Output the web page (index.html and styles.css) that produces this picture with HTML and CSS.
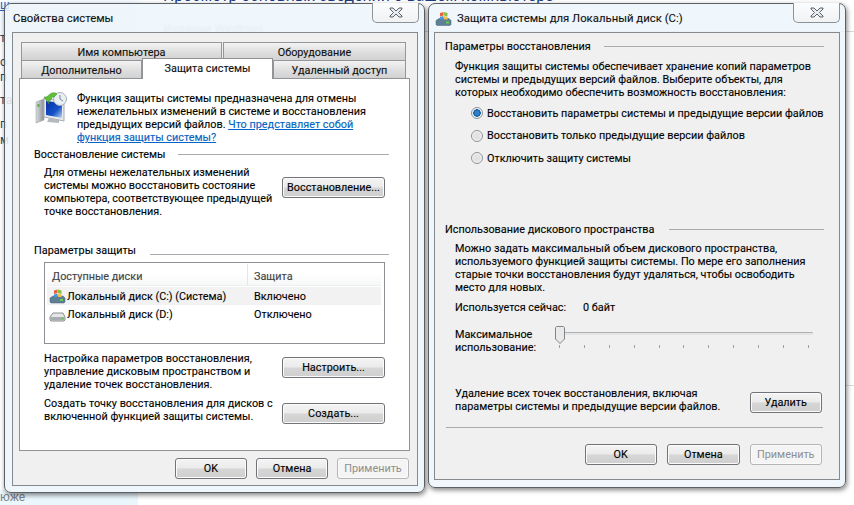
FILE: index.html
```html
<!DOCTYPE html>
<html lang="ru">
<head>
<meta charset="utf-8">
<title>Защита системы</title>
<link rel="stylesheet" href="styles.css">
</head>
<body>
<div class="desktop">
  <div class="backdrop">
    <div class="glow glow-top"></div>
    <div class="glow glow-bottom"></div>
    <h1 class="bg-title">Просмотр основных сведений о вашем компьютере</h1>
    <div class="bg-sub">Издание Windows</div>
    <div class="bg-frag bf1">ш</div>
    <div class="bg-frag bf2">т</div>
    <div class="bg-frag bf3">о</div>
    <div class="bg-frag bf4">п</div>
    <div class="bg-frag bf5">та</div>
    <div class="bg-frag bf6">п</div>
    <div class="bg-frag bf7">м</div>
    <div class="bg-frag bf8">юже</div>
    <div class="rule"></div>
    <div class="rule2"></div>
  </div>

  <section class="window win-left">
    <header class="titlebar">
      <span class="title">Свойства системы</span>
      <span class="close"><svg width="16" height="11" viewBox="0 0 16 11"><path d="M2 1h3l3 3 3-3h3v1l-3.500 3.500L14 9v1h-3L8 7l-3 3H2V9l3.500-3.500L2 2z" fill="#e8ebef" stroke="#5c6068" stroke-width="1"/></svg></span>
    </header>
    <div class="panel panel-left">
      <div class="tabs">
        <div class="tabrow tabrow-back">
          <div class="tab tab-a">Имя компьютера</div>
          <div class="tab tab-b">Оборудование</div>
        </div>
        <div class="tabrow tabrow-front">
          <div class="tab tab-c">Дополнительно</div>
          <div class="tab tab-sel">Защита системы</div>
          <div class="tab tab-d">Удаленный доступ</div>
        </div>
      </div>
      <div class="page">
        <div class="intro">
          <svg class="sys-icon" width="34" height="34" viewBox="0 0 34 34">
            <defs>
              <linearGradient id="scr" x1="0" y1="0" x2="1" y2="1"><stop offset="0" stop-color="#0a2fa8"/><stop offset=".6" stop-color="#1552c8"/><stop offset="1" stop-color="#bcd6f2"/></linearGradient>
              <linearGradient id="case" x1="0" y1="0" x2="1" y2="0"><stop offset="0" stop-color="#d9dcdf"/><stop offset="1" stop-color="#8b9096"/></linearGradient>
            </defs>
            <path d="M1 11l8-3v21l-8 3z" fill="url(#case)" stroke="#8f9498" stroke-width=".5"/>
            <rect x="2.500" y="13" width="2" height="3" fill="#5fa848"/>
            <path d="M9 7l20 3v20L9 26z" fill="#e8eaec" stroke="#a8acb0"/>
            <path d="M11 10l16 2v15l-16-3z" fill="url(#scr)"/>
            <path d="M14 27l10 2v3l-12-1z" fill="#b5b9bd"/>
            <circle cx="25" cy="8" r="6.500" fill="#e9eef4" stroke="#a7afb9"/>
            <path d="M25 4v4l3 2" fill="none" stroke="#7d8794" stroke-width="1"/>
            <path d="M13 5c3-4 7-4 9-2l-3 3h-2l-1 3-3 1 1 3-5-7 2 0z" fill="#5fbf3c" stroke="#3d8f24" stroke-width=".5"/>
          </svg>
          <p class="intro-text">Функция защиты системы предназначена для отмены<br>нежелательных изменений в системе и восстановления<br>предыдущих версий файлов. <a class="link">Что представляет собой<br>функция защиты системы?</a></p>
        </div>

        <div class="group-head head-restore"><span>Восстановление системы</span><i class="hr"></i></div>
        <div class="action action-restore">
          <p class="desc">Для отмены нежелательных изменений<br>системы можно восстановить состояние<br>компьютера, соответствующее предыдущей<br>точке восстановления.</p>
          <button class="btn btn-wide btn-push">Восстановление...</button>
        </div>

        <div class="group-head head-protect"><span>Параметры защиты</span><i class="hr"></i></div>
        <div class="table">
          <div class="thead">
            <div class="th th-1">Доступные диски</div>
            <div class="th th-2">Защита</div>
          </div>
          <div class="row row-on">
            <div class="cell-name">
              <svg class="disk-icon" width="17" height="16" viewBox="0 0 17 16">
                <path d="M1 10l3-2h10l2 2v4l-1 1H2l-1-1z" fill="#5f7f96" stroke="#4a6274" stroke-width=".5"/>
                <rect x="11" y="11" width="3" height="2" fill="#67d04a"/>
                <path d="M5 2.500l3.500-1v3.500L5 6z" fill="#e8613c"/><path d="M9 1.500l3.500 1v3.500L9 5z" fill="#8ac03e"/>
                <path d="M5 6.500l3.500-1v3.500H5z" fill="#4a96dc"/><path d="M9 5.500l3.500 1V9H9z" fill="#f2c14a"/>
              </svg>
              <span>Локальный диск (C:) (Система)</span>
            </div>
            <div class="cell-state">Включено</div>
          </div>
          <div class="row">
            <div class="cell-name">
              <svg class="disk-icon" width="17" height="16" viewBox="0 0 17 16">
                <path d="M1 11l3-4h10l2 4v3l-1 1H2l-1-1z" fill="#e4e6e8" stroke="#8a8e92"/>
                <path d="M1.500 11h14v3l-1 .5H2.500l-1-.5z" fill="#a9adb1"/>
                <rect x="12" y="11.500" width="2.500" height="2" fill="#67d04a"/>
              </svg>
              <span>Локальный диск (D:)</span>
            </div>
            <div class="cell-state">Отключено</div>
          </div>
        </div>

        <div class="action action-setup">
          <p class="desc">Настройка параметров восстановления,<br>управление дисковым пространством и<br>удаление точек восстановления.</p>
          <button class="btn btn-wide">Настроить...</button>
        </div>
        <div class="action action-create">
          <p class="desc">Создать точку восстановления для дисков с<br>включенной функцией защиты системы.</p>
          <button class="btn btn-wide">Создать...</button>
        </div>
      </div>
      <div class="footer footer-left">
        <button class="btn btn-foot">OK</button>
        <button class="btn btn-foot">Отмена</button>
        <button class="btn btn-foot btn-off">Применить</button>
      </div>
    </div>
  </section>

  <section class="window win-right">
    <header class="titlebar">
      <svg class="title-icon" width="17" height="17" viewBox="0 0 17 16">
        <path d="M1 10l3-2h10l2 2v4l-1 1H2l-1-1z" fill="#5f7f96" stroke="#4a6274" stroke-width=".5"/>
        <rect x="11" y="11" width="3" height="2" fill="#67d04a"/>
        <path d="M5 2.500l3.500-1v3.500L5 6z" fill="#e8613c"/><path d="M9 1.500l3.500 1v3.500L9 5z" fill="#8ac03e"/>
        <path d="M5 6.500l3.500-1v3.500H5z" fill="#4a96dc"/><path d="M9 5.500l3.500 1V9H9z" fill="#f2c14a"/>
      </svg>
      <span class="title">Защита системы для Локальный диск (C:)</span>
      <span class="close"><svg width="16" height="11" viewBox="0 0 16 11"><path d="M2 1h3l3 3 3-3h3v1l-3.500 3.500L14 9v1h-3L8 7l-3 3H2V9l3.500-3.500L2 2z" fill="#e8ebef" stroke="#5c6068" stroke-width="1"/></svg></span>
    </header>
    <div class="panel panel-right">
      <div class="group-head head-params"><span>Параметры восстановления</span><i class="hr"></i></div>
      <p class="desc desc-r desc-first">Функция защиты системы обеспечивает хранение копий параметров<br>системы и предыдущих версий файлов. Выберите объекты, для<br>которых необходимо обеспечить возможность восстановления:</p>
      <div class="radios">
        <label class="radio"><i class="dot dot-on"></i>Восстановить параметры системы и предыдущие версии файлов</label>
        <label class="radio radio-mid"><i class="dot"></i>Восстановить только предыдущие версии файлов</label>
        <label class="radio"><i class="dot"></i>Отключить защиту системы</label>
      </div>
      <div class="group-head head-usage"><span>Использование дискового пространства</span><i class="hr"></i></div>
      <p class="desc desc-r">Можно задать максимальный объем дискового пространства,<br>используемого функцией защиты системы. По мере его заполнения<br>старые точки восстановления будут удаляться, чтобы освободить<br>место для новых.</p>
      <div class="now"><span class="now-label">Используется сейчас:</span><span>0 байт</span></div>
      <div class="slider-row">
        <div class="slider-label">Максимальное<br>использование:</div>
        <div class="slider">
          <div class="track"></div>
          <svg class="thumb" width="10" height="18" viewBox="0 0 10 18"><path d="M.5 1.500l1-1h7l1 1v11.500L5 17.500.5 13z" fill="#e9e9e9" stroke="#7f8589"/></svg>
          <div class="ticks"><i></i><i></i><i></i><i></i><i></i><i></i><i></i><i></i><i></i><i></i><i></i></div>
        </div>
      </div>
      <div class="delete-row">
        <p class="desc">Удаление всех точек восстановления, включая<br>параметры системы и предыдущие версии файлов.</p>
        <button class="btn btn-foot">Удалить</button>
      </div>
      <div class="sep"></div>
      <div class="footer footer-right">
        <button class="btn btn-foot">OK</button>
        <button class="btn btn-foot">Отмена</button>
        <button class="btn btn-foot btn-off">Применить</button>
      </div>
    </div>
  </section>
</div>
</body>
</html>
```

FILE: styles.css
```css
* { box-sizing: border-box; }
html, body { margin: 0; padding: 0; }
body { width: 854px; height: 505px; overflow: hidden; background: #fff; font: 10.85px/13px Roboto, "Noto Sans", sans-serif; color: #000; }
p { margin: 0; }

.desktop { position: relative; width: 854px; height: 505px; overflow: hidden; background: #fff; }
.backdrop { position: absolute; inset: 0; overflow: hidden; }
.glow { position: absolute; left: 0; width: 138px; background: #eef8fe; }
.glow-top { top: 0; height: 40px; filter: blur(3px); }
.glow-bottom { top: 490px; height: 15px; background: #eaf7fc; }
.bg-title { position: absolute; left: 163px; top: -14px; margin: 0; font: 400 15.8px/20px Roboto, sans-serif; color: #1b3c80; white-space: nowrap; }
.bg-sub { position: absolute; left: 163px; top: 23px; font-size: 12px; color: #9fb4cf; filter: blur(1px); }
.bg-frag { position: absolute; left: 0; font-size: 12px; color: #34465e; }
.bf1 { top: -1px; color: #2a5fb8; text-decoration: underline; }
.bf2 { top: 32px; }
.bf3 { top: 56px; }
.bf4 { top: 71px; }
.bf5 { top: 94px; }
.bf6 { top: 118px; }
.bf7 { top: 134px; }
.bf8 { top: 491px; color: #7a8288; }
.rule { position: absolute; left: 425px; right: 0; top: 31px; height: 1px; background: #d8d8d8; }
.rule2 { position: absolute; left: 846px; right: 0; top: 385px; height: 1px; background: #dcdcdc; }

.window { position: absolute; display: flex; flex-direction: column; border: 1px solid #5c5f63; border-radius: 7px; background: rgba(238, 246, 252, .86); box-shadow: 1px 2px 5px rgba(0,0,0,.5); text-shadow: 0 0 1px rgba(0,0,0,.22); }
.win-left { left: 4px; top: 3px; width: 421px; height: 490px; padding: 0 6px 6px 7px; }
.win-right { left: 428px; top: 3px; width: 418px; height: 485px; padding: 0 5px 7px 5px; }

.titlebar { position: relative; flex: none; height: 28px; display: flex; align-items: center; }
.title { font-size: 11.35px; line-height: 13px; color: #111; }
.win-left .title { margin: 1px 0 0 1px; }
.win-right .title { margin: 1px 0 0 5px; }
.title-icon { margin-left: 1px; }
.close { position: absolute; top: -1px; width: 47px; height: 20px; display: flex; align-items: center; justify-content: center; border: 1px solid #8d9297; border-top: 0; border-radius: 0 0 5px 5px; background: linear-gradient(#fbfcfd, #f0f2f4); }
.win-left .close { right: -1px; }
.win-right .close { right: 0; }

.panel { flex: 1; min-height: 0; display: flex; flex-direction: column; border: 1px solid #858a8e; background: #f0f0f0; }
.panel-left { padding: 9px 8px 0 6px; }

.tabs { flex: none; height: 36px; position: relative; z-index: 2; padding-left: 2px; }
.tabrow { display: flex; height: 18px; }
.tab { display: flex; align-items: center; justify-content: center; height: 18px; padding-top: 2px; border: 1px solid #93979b; border-bottom: 0; background: linear-gradient(#f3f3f3, #dedede 55%, #d2d2d2); color: #111; }
.tab-a { width: 201px; }
.tab-b { width: 183px; margin-left: 1px; }
.tab-c { width: 121px; }
.tab-d { width: 133px; }
.tab-sel { width: 131px; height: 21px; margin-top: -2px; padding: 0 0 1px; background: #fff; border-color: #8f9397; position: relative; z-index: 2; margin-bottom: -1px; }

.page { flex: none; width: 391px; height: 373px; background: #fff; border: 1px solid #8f9397; padding: 12px 24px 0 14px; position: relative; z-index: 1; }

.intro { display: flex; height: 57px; }
.sys-icon { flex: none; margin: 0 0 0 1px; }
.intro-text { margin: 1px 0 0 8px; white-space: nowrap; }
.link { color: #0066cc; text-decoration: underline; }

.group-head { display: flex; align-items: center; height: 13px; justify-content: space-between; }
.group-head span { flex: none; }
.hr { flex: none; height: 1px; background: #a8abae; }
.head-restore .hr { width: 211px; margin-right: -4px; }
.head-protect { margin-top: 25px; }
.head-protect .hr { width: 239px; margin: 8px -4px 0 0; }

.desc { white-space: nowrap; }
.action { display: flex; align-items: flex-start; justify-content: space-between; padding-left: 10px; }
.action-restore { margin-top: 5px; height: 53px; }
.action-setup { margin-top: 8px; height: 40px; }
.action-create { margin-top: 5px; }
.btn { display: block; font: 10.85px/13px Roboto, "Noto Sans", sans-serif; color: #000; height: 21px; padding: 0; border: 1px solid #707478; border-radius: 3px; background: linear-gradient(#f4f4f4, #ebebeb 48%, #d6d6d6 52%, #cfcfcf); box-shadow: inset 0 0 0 1px #fbfbfb; text-shadow: inherit; }
.btn-wide { width: 103px; flex: none; }
.btn-push { margin-top: 11px; }
.action-setup .btn { margin-top: 5px; }
.action-create .btn { margin-top: 6px; }
.btn-foot { width: 72.5px; flex: none; }
.btn-off { color: #8e8e8e; border-color: #b3b6b9; background: #f4f4f4; box-shadow: inset 0 0 0 1px #fafafa; text-shadow: none; }

.table { margin: 5px 0 0 10px; width: 341px; height: 82px; border: 1px solid #8c9094; background: #fff; padding: 1px 3px 0 2px; }
.thead { display: flex; height: 22px; align-items: center; border-bottom: 1px solid #eeeeee; background: linear-gradient(#fff, #fff 45%, #f6f7f8); }
.th { color: #444; padding-top: 4px; }
.th-1 { width: 201px; padding-left: 5px; border-right: 1px solid #e4e6e8; height: 100%; display: flex; align-items: center; }
.th-2 { padding-left: 6px; }
.row { display: flex; height: 17px; align-items: center; padding-top: 1px; }
.row-on { height: 18px; margin-top: 1px; background: #f2f2f2; }
.cell-name { width: 200px; display: flex; align-items: center; gap: 1px; }
.disk-icon { flex: none; margin: -1px 0 0 2px; }
.cell-state { padding-left: 7px; }

.footer { display: flex; justify-content: flex-end; }
.footer-left { margin-top: 7px; width: 390px; gap: 9px; }
.footer-left .btn-foot { width: 72px; }
.footer-right { margin: 16px 17px 0 0; gap: 10px; }

.head-params { margin: 7px 15px 0 10px; }
.head-params .hr { width: 220px; }
.desc-r { margin: 6px 0 0 20px; }
.desc-first { margin-top: 7px; }
.radios { display: flex; flex-direction: column; margin: 3px 0 0 36px; }
.radio { display: flex; align-items: center; height: 22px; gap: 4px; white-space: nowrap; }
.radio-mid { height: 23px; }
.dot { width: 12px; height: 12px; flex: none; border-radius: 50%; border: 1px solid #8e9499; background: radial-gradient(circle at 50% 50%, #e2e2e2 0 3px, #f5f5f5 5px); }
.dot-on { background: radial-gradient(circle at 50% 50%, #2f80c9 0 2px, #0c5a9c 3.500px, #eef1f4 4px); }
.head-usage { margin: 54px 15px 0 10px; }
.head-usage .hr { width: 155px; }
.now { display: flex; margin: 7px 0 0 20px; }
.now-label { width: 128px; }
.slider-row { display: flex; margin: 14px 0 0 20px; height: 26px; }
.slider-label { width: 100px; }
.slider { position: relative; width: 258px; height: 26px; }
.track { position: absolute; left: 0; right: 0; top: 4px; height: 3px; background: #e4e4e4; border-top: 1px solid #aeb1b4; border-radius: 1px; }
.thumb { position: absolute; left: 0; top: -2px; }
.ticks { position: absolute; left: 4px; top: 17px; width: 250px; display: flex; justify-content: space-between; }
.ticks i { display: block; width: 1px; height: 3px; background: #a0a0a0; }
.delete-row { display: flex; justify-content: space-between; align-items: flex-start; margin: 33px 17px 0 20px; }
.delete-row .btn { margin-top: 5px; }
.sep { height: 1px; margin: 14px 16px 0 11px; background: #a8abae; }
```
